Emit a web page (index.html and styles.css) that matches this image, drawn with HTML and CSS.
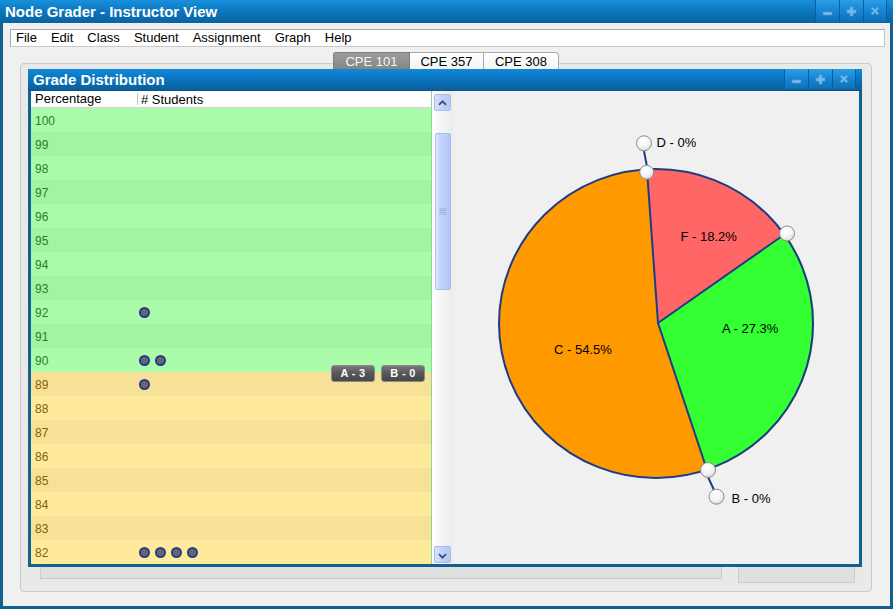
FILE: index.html
```html
<!DOCTYPE html>
<html>
<head>
<meta charset="utf-8">
<title>Node Grader - Instructor View</title>
<link rel="stylesheet" href="styles.css">
</head>
<body>
<div class="app">
  <div class="titlebar">
    <span class="title">Node Grader - Instructor View</span>
    <div class="winbtns">
      <span class="wb"><svg width="23" height="22" viewBox="0 0 23 22"><rect x="7" y="12" width="9" height="3" rx="1" class="ic"/></svg></span>
      <span class="wb"><svg width="23" height="22" viewBox="0 0 23 22"><path d="M10 7h3v3h3v3h-3v3h-3v-3h-3v-3h3z" class="ic"/></svg></span>
      <span class="wb"><svg width="23" height="22" viewBox="0 0 23 22"><path d="M7.5 8.5l1.5-1.5 2.5 2.5 2.5-2.5 1.5 1.5-2.5 2.5 2.5 2.5-1.5 1.5-2.5-2.5-2.5 2.5-1.5-1.5 2.5-2.5z" class="ic"/></svg></span>
    </div>
  </div>
  <div class="main">
    <div class="menubar">
      <span class="mi">File</span>
      <span class="mi">Edit</span>
      <span class="mi">Class</span>
      <span class="mi">Student</span>
      <span class="mi">Assignment</span>
      <span class="mi">Graph</span>
      <span class="mi">Help</span>
    </div>
    <div class="tabarea">
      <div class="tabs">
        <span class="tab sel">CPE 101</span>
        <span class="tab">CPE 357</span>
        <span class="tab last">CPE 308</span>
      </div>
      <div class="tabpanel">
        <div class="frame">
          <div class="ftitle">
            <span class="ftext">Grade Distribution</span>
            <div class="fbtns">
              <span class="fb"><svg width="23" height="20" viewBox="0 0 23 20"><rect x="7" y="11" width="9" height="3" rx="1" class="ic"/></svg></span>
              <span class="fb"><svg width="23" height="20" viewBox="0 0 23 20"><path d="M10 6h3v3h3v3h-3v3h-3v-3h-3v-3h3z" class="ic"/></svg></span>
              <span class="fb"><svg width="23" height="20" viewBox="0 0 23 20"><path d="M7.5 7.5l1.5-1.5 2.5 2.5 2.5-2.5 1.5 1.5-2.5 2.5 2.5 2.5-1.5 1.5-2.5-2.5-2.5 2.5-1.5-1.5 2.5-2.5z" class="ic"/></svg></span>
            </div>
          </div>
          <div class="fbody">
            <div class="table">
              <div class="thead">
                <span class="th th-pct">Percentage</span>
                <span class="th th-st"># Students</span>
              </div>
              <div class="row g a"><span class="pct">100</span><span class="dots"></span></div>
              <div class="row g b"><span class="pct">99</span><span class="dots"></span></div>
              <div class="row g a"><span class="pct">98</span><span class="dots"></span></div>
              <div class="row g b"><span class="pct">97</span><span class="dots"></span></div>
              <div class="row g a"><span class="pct">96</span><span class="dots"></span></div>
              <div class="row g b"><span class="pct">95</span><span class="dots"></span></div>
              <div class="row g a"><span class="pct">94</span><span class="dots"></span></div>
              <div class="row g b"><span class="pct">93</span><span class="dots"></span></div>
              <div class="row g a"><span class="pct">92</span><span class="dots"><i class="dot"></i></span></div>
              <div class="row g b"><span class="pct">91</span><span class="dots"></span></div>
              <div class="row g a"><span class="pct">90</span><span class="dots"><i class="dot"></i><i class="dot"></i></span></div>
              <div class="row y b"><span class="pct">89</span><span class="dots"><i class="dot"></i></span></div>
              <div class="row y a"><span class="pct">88</span><span class="dots"></span></div>
              <div class="row y b"><span class="pct">87</span><span class="dots"></span></div>
              <div class="row y a"><span class="pct">86</span><span class="dots"></span></div>
              <div class="row y b"><span class="pct">85</span><span class="dots"></span></div>
              <div class="row y a"><span class="pct">84</span><span class="dots"></span></div>
              <div class="row y b"><span class="pct">83</span><span class="dots"></span></div>
              <div class="row y a"><span class="pct">82</span><span class="dots"><i class="dot"></i><i class="dot"></i><i class="dot"></i><i class="dot"></i></span></div>
              <div class="badges">
                <span class="badge">A - 3</span>
                <span class="badge">B - 0</span>
              </div>
            </div>
            <div class="scroll">
              <span class="sbtn up"><svg width="17" height="17" viewBox="0 0 17 17"><path d="M4.5 10l4-4 4 4" class="chev"/></svg></span>
              <span class="thumb"><svg width="16" height="10" viewBox="0 0 16 10"><path d="M4 1.5h8M4 3.5h8M4 5.5h8M4 7.5h8" class="grip"/></svg></span>
              <span class="sspace"></span>
              <span class="sbtn down"><svg width="17" height="17" viewBox="0 0 17 17"><path d="M4.5 7l4 4 4-4" class="chev"/></svg></span>
            </div>
            <div class="chart">
              <svg width="406" height="473" viewBox="453 91 406 473">
                <defs>
                  <radialGradient id="hg" cx="0.4" cy="0.3" r="0.8">
                    <stop offset="0" stop-color="#ffffff"/>
                    <stop offset="0.55" stop-color="#f4f4f4"/>
                    <stop offset="1" stop-color="#cfcfcf"/>
                  </radialGradient>
                </defs>
                <ellipse cx="656" cy="323.5" rx="157" ry="154.5" class="sl-c"/>
                <path d="M658 323 L647 170 A157 154.5 0 0 1 785 234 Z" class="sl-f"/>
                <path d="M658 323 L785 234 A157 154.5 0 0 1 707 470 Z" class="sl-a"/>
                <path d="M647 170 L658 323 L785 234 M658 323 L707 470" class="edge"/>
                <ellipse cx="656" cy="323.5" rx="157" ry="154.5" class="ring"/>
                <path d="M644 151 L646.7 165 M708 477 L714 490" class="edge"/>
                <circle cx="644" cy="143.3" r="7.5" class="hdl"/>
                <circle cx="646.7" cy="172.3" r="7" class="hdl"/>
                <circle cx="787" cy="233.5" r="7.5" class="hdl"/>
                <circle cx="708" cy="470" r="7.5" class="hdl"/>
                <circle cx="716.5" cy="496.7" r="7.5" class="hdl"/>
                <text x="656.5" y="146.5" class="lbl">D - 0%</text>
                <text x="680.5" y="240.5" class="lbl">F - 18.2%</text>
                <text x="722" y="332.5" class="lbl">A - 27.3%</text>
                <text x="554" y="353.5" class="lbl">C - 54.5%</text>
                <text x="731.5" y="503" class="lbl">B - 0%</text>
              </svg>
            </div>
          </div>
        </div>
        <div class="under">
          <div class="ubox-l"></div>
          <div class="ubox-r"></div>
        </div>
      </div>
    </div>
  </div>
</div>
</body>
</html>
```
FILE: styles.css
```css
* { box-sizing: border-box; }
html, body { margin: 0; padding: 0; }
body {
  width: 893px;
  height: 609px;
  overflow: hidden;
  background: #f0f0f0;
  font-family: "Liberation Sans", Arial, sans-serif;
}
.app {
  width: 893px;
  height: 609px;
  display: flex;
  flex-direction: column;
}
.titlebar {
  height: 23px;
  flex: none;
  display: flex;
  background: linear-gradient(#1791dc 0%, #0c78c0 45%, #0a62a0 100%);
}
.title {
  padding: 1px 0 0 5px;
  line-height: 22px;
  font-size: 15px;
  font-weight: bold;
  color: #ffffff;
}
.winbtns {
  margin-left: auto;
  margin-right: 6px;
  display: flex;
  height: 22px;
}
.wb {
  width: 24px;
  height: 22px;
  display: flex;
  justify-content: center;
  background: linear-gradient(#2a9ee6, #1685d2 50%, #0f70b6);
  border-left: 1px solid #0c5f9e;
}
.wb:last-child { border-right: 1px solid #0c5f9e; }
.ic { fill: #7fc0ee; stroke: #5aa6dc; stroke-width: 0.6; opacity: 0.9; }

.main {
  flex: 1;
  display: flex;
  flex-direction: column;
  border: 3px solid #136190;
  border-top: 0;
  padding: 6px 5px 0 7px;
  background: #f0f0f0;
}
.menubar {
  height: 18px;
  flex: none;
  display: flex;
  gap: 14px;
  padding-left: 5px;
  background: #ffffff;
  border: 1px solid #a8a8a8;
  border-right-color: #c4c4c4;
  border-bottom-color: #c8c8c8;
  font-size: 13px;
  line-height: 16px;
  color: #000;
}
.tabarea {
  margin: 5px 0 0 10px;
  width: 852px;
  display: flex;
  flex-direction: column;
}
.tabs {
  align-self: center;
  display: flex;
  position: relative;
  z-index: 1;
  margin-bottom: -6px;
  height: 17px;
}
.tab {
  height: 17px;
  padding: 1px 0 0 0;
  line-height: 15px;
  font-size: 13px;
  text-align: center;
  color: #000;
  background: linear-gradient(#ffffff, #f3f3f3);
  border: 1px solid #a9a9a9;
  border-bottom: 0;
  border-left: 0;
  width: 74px;
}
.tab.sel {
  width: 77px;
  color: #f4f4f4;
  background: linear-gradient(#9c9c9c, #868686);
  border: 1px solid #7e7e7e;
  border-bottom: 0;
  border-radius: 3px 0 0 0;
}
.tab.last { width: 75px; border-radius: 0 4px 0 0; }
.tabpanel {
  height: 529px;
  border: 1px solid #cacaca;
  border-radius: 4px;
  background: #e9e9e9;
  padding: 5px 0 0 7px;
  display: flex;
  flex-direction: column;
}
.frame {
  width: 834px;
  height: 498px;
  display: flex;
  flex-direction: column;
}
.ftitle {
  height: 22px;
  flex: none;
  display: flex;
  background: linear-gradient(#108ad8 0%, #0a76c0 45%, #0a5f9c 100%);
  border-bottom: 1px solid #0d5486;
}
.ftext {
  padding: 1px 0 0 5px;
  line-height: 20px;
  font-size: 15px;
  font-weight: bold;
  color: #ffffff;
}
.fbtns {
  margin-left: auto;
  margin-right: 6px;
  display: flex;
  height: 20px;
}
.fb {
  width: 24px;
  height: 20px;
  display: flex;
  justify-content: center;
  background: linear-gradient(#2a9ee6, #1685d2 50%, #0f70b6);
  border-left: 1px solid #0c5f9e;
}
.fb:last-child { border-right: 1px solid #0c5f9e; }
.fbody {
  height: 476px;
  display: flex;
  border: 3px solid #136190;
  border-top: 0;
}
.table {
  width: 401px;
  position: relative;
  display: flex;
  flex-direction: column;
  border-right: 1px solid #8fd68f;
}
.thead {
  height: 17px;
  flex: none;
  display: flex;
  background: #ffffff;
  border-bottom: 1px solid #d2d2d2;
  font-size: 13px;
  line-height: 15px;
  color: #000;
}
.th { padding-top: 1px; }
.th-pct {
  width: 107px;
  padding-left: 4px;
  border-right: 1px solid #c0c0c0;
  margin: 2px 0 2px 0;
  padding-top: 0;
  line-height: 12px;
}
.th-st { padding-left: 3px; }
.row {
  height: 24px;
  flex: none;
  display: flex;
  align-items: center;
  padding-left: 4px;
  font-size: 12px;
}
.pct { width: 104px; padding-top: 1px; }
.dots { display: flex; gap: 5px; }
.dot {
  width: 11px;
  height: 11px;
  border-radius: 50%;
  background: #66676d;
  border: 2px solid #25398a;
}
.row.g { color: #2c7f22; }
.row.g.a { background: #aafcaa; }
.row.g.b { background: #a2f3a2; }
.row.y { color: #87600a; }
.row.y.a { background: #ffea9c; }
.row.y.b { background: #f6e197; }
.badges {
  position: absolute;
  left: 300px;
  top: 274px;
  display: flex;
  gap: 6px;
}
.badge {
  width: 44px;
  height: 17px;
  border-radius: 3px;
  background: linear-gradient(#7a7a7a, #555555 50%, #484848);
  border: 1px solid #8a8a8a;
  color: #ffffff;
  font-size: 11px;
  font-weight: bold;
  line-height: 15px;
  text-align: center;
  letter-spacing: 0.3px;
}
.scroll {
  width: 21px;
  display: flex;
  flex-direction: column;
  align-items: center;
  background: linear-gradient(90deg, #ffffff, #f6f6f6 40%, #ececec);
  padding: 3px 0 1px 0;
}
.sbtn {
  width: 17px;
  height: 17px;
  flex: none;
  background: linear-gradient(90deg, #d6e3fc, #bed2fb 50%, #b4c9f6);
  border: 1px solid #a5bbe8;
  border-radius: 2px;
  display: flex;
}
.chev { fill: none; stroke: #3f4d78; stroke-width: 2; }
.thumb {
  margin-top: 22px;
  width: 16px;
  height: 157px;
  flex: none;
  background: linear-gradient(90deg, #e4ecfe 0%, #c4d6fc 25%, #bccffb 70%, #b0c5f4 100%);
  border: 1px solid #a9bdec;
  border-radius: 2px;
  display: flex;
  align-items: center;
  justify-content: center;
}
.grip { stroke: #93aadf; stroke-width: 1; }
.sspace { flex: 1; }
.chart {
  width: 406px;
  background: #f0f0f0;
}
.chart svg { display: block; }
.sl-c { fill: #ff9900; }
.sl-f { fill: #ff6666; }
.sl-a { fill: #33ff33; }
.edge { fill: none; stroke: #1f3b85; stroke-width: 2; }
.ring { fill: none; stroke: #1f3b85; stroke-width: 2; }
.hdl { fill: url(#hg); stroke: #8c8c8c; stroke-width: 1; }
.lbl { font-family: "Liberation Sans", Arial, sans-serif; font-size: 13px; fill: #000; }
.under {
  display: flex;
  padding-left: 12px;
}
.ubox-l {
  width: 682px;
  height: 12px;
  background: #dfdfdf;
  border: 1px solid #cbcbcb;
  border-top: 0;
}
.ubox-r {
  margin-left: 16px;
  width: 117px;
  height: 16px;
  background: #dfdfdf;
  border: 1px solid #cbcbcb;
  border-top: 0;
}
```
